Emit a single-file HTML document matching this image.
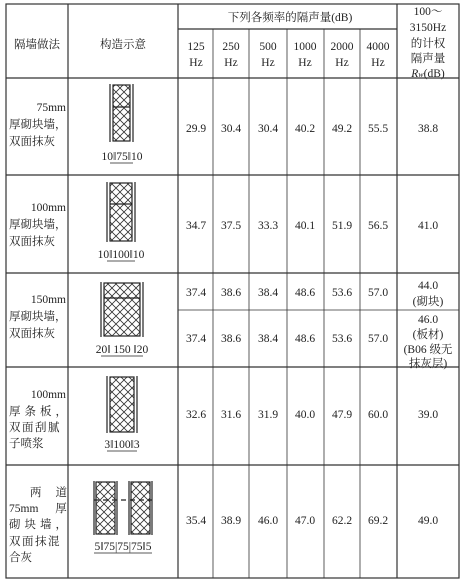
<!DOCTYPE html>
<html><head><meta charset="utf-8"><style>
html,body{margin:0;padding:0;background:#fff;}
svg{display:block}
text{font-family:"Liberation Serif","Noto Serif CJK SC",serif;fill:#222;font-size:11.5px}
.c{text-anchor:middle}.r{text-anchor:end}
.k{font-family:"Liberation Serif","Noto Serif CJK SC",serif;font-size:11.5px}
</style></head><body>
<svg width="462" height="580" viewBox="0 0 462 580" xmlns="http://www.w3.org/2000/svg">
<defs>
<pattern id="x" width="8" height="8" patternUnits="userSpaceOnUse">
<path d="M0 0L8 8M8 0L0 8" stroke="#333" stroke-width="0.8"/>
</pattern>
</defs>
<g stroke="#333" stroke-width="1.2" fill="none">
<rect x="6" y="4" width="453" height="574"/>
<line x1="68" y1="4" x2="68" y2="578"/>
<line x1="178" y1="4" x2="178" y2="578"/>
<line x1="397" y1="4" x2="397" y2="578"/>
<line x1="178" y1="29" x2="397" y2="29"/>
<g stroke-width="0.8">
<line x1="213" y1="29" x2="213" y2="578"/>
<line x1="249" y1="29" x2="249" y2="578"/>
<line x1="287" y1="29" x2="287" y2="578"/>
<line x1="324" y1="29" x2="324" y2="578"/>
<line x1="360" y1="29" x2="360" y2="578"/>
<line x1="178" y1="310" x2="459" y2="310"/>
</g>
<line x1="6" y1="78" x2="459" y2="78"/>
<line x1="6" y1="175" x2="459" y2="175"/>
<line x1="6" y1="273" x2="459" y2="273"/>
<line x1="6" y1="367" x2="459" y2="367"/>
<line x1="6" y1="465" x2="459" y2="465"/>
</g>
<!-- header -->
<text class="k c" x="37" y="48">隔墙做法</text>
<text class="k c" x="123" y="48">构造示意</text>
<text class="k c" x="290" y="21">下列各频率的隔声量(dB)</text>
<g class="c">
<text class="c" x="196" y="50">125</text><text class="c" x="196" y="66">Hz</text>
<text class="c" x="231" y="50">250</text><text class="c" x="231" y="66">Hz</text>
<text class="c" x="268" y="50">500</text><text class="c" x="268" y="66">Hz</text>
<text class="c" x="305" y="50">1000</text><text class="c" x="305" y="66">Hz</text>
<text class="c" x="342" y="50">2000</text><text class="c" x="342" y="66">Hz</text>
<text class="c" x="378" y="50">4000</text><text class="c" x="378" y="66">Hz</text>
</g>
<text class="c" x="428" y="15">100～</text>
<text class="c" x="428" y="31">3150Hz</text>
<text class="k c" x="428" y="47">的计权</text>
<text class="k c" x="428" y="62">隔声量</text>
<text class="c" x="428" y="77"><tspan font-style="italic">R</tspan><tspan font-size="8" font-style="italic">w</tspan>(dB)</text>
<!-- left column -->
<text class="r" x="66" y="111">75mm</text>
<text class="k" x="9" y="128">厚砌块墙，</text>
<text class="k" x="9" y="145">双面抹灰</text>
<text class="r" x="66" y="211">100mm</text>
<text class="k" x="9" y="228">厚砌块墙，</text>
<text class="k" x="9" y="245">双面抹灰</text>
<text class="r" x="66" y="303">150mm</text>
<text class="k" x="9" y="320">厚砌块墙，</text>
<text class="k" x="9" y="337">双面抹灰</text>
<text class="r" x="66" y="398">100mm</text>
<text class="k" x="9" y="415" letter-spacing="4">厚条板，</text>
<text class="k" x="9" y="431" letter-spacing="1.5">双面刮腻</text>
<text class="k" x="9" y="447">子喷浆</text>
<text class="k" x="30" y="496" letter-spacing="14">两道</text>
<text x="9" y="512">75mm <tspan class="k" dx="14">厚</tspan></text>
<text class="k" x="9" y="528" letter-spacing="4">砌块墙，</text>
<text class="k" x="9" y="545" letter-spacing="1.5">双面抹混</text>
<text class="k" x="9" y="561">合灰</text>
<!-- data -->
<g font-size="11">
<text class="c" x="196" y="132">29.9</text><text class="c" x="231" y="132">30.4</text><text class="c" x="268" y="132">30.4</text><text class="c" x="305" y="132">40.2</text><text class="c" x="342" y="132">49.2</text><text class="c" x="378" y="132">55.5</text><text class="c" x="428" y="132">38.8</text>
<text class="c" x="196" y="229">34.7</text><text class="c" x="231" y="229">37.5</text><text class="c" x="268" y="229">33.3</text><text class="c" x="305" y="229">40.1</text><text class="c" x="342" y="229">51.9</text><text class="c" x="378" y="229">56.5</text><text class="c" x="428" y="229">41.0</text>
<text class="c" x="196" y="296">37.4</text><text class="c" x="231" y="296">38.6</text><text class="c" x="268" y="296">38.4</text><text class="c" x="305" y="296">48.6</text><text class="c" x="342" y="296">53.6</text><text class="c" x="378" y="296">57.0</text>
<text class="c" x="428" y="289">44.0</text><text class="k c" x="428" y="305">(砌块)</text>
<text class="c" x="196" y="342">37.4</text><text class="c" x="231" y="342">38.6</text><text class="c" x="268" y="342">38.4</text><text class="c" x="305" y="342">48.6</text><text class="c" x="342" y="342">53.6</text><text class="c" x="378" y="342">57.0</text>
<text class="c" x="428" y="323">46.0</text><text class="k c" x="428" y="338">(板材)</text><text class="k c" x="428" y="353">(B06 级无</text><text class="k c" x="428" y="368" dy="-1">抹灰层)</text>
<text class="c" x="196" y="418">32.6</text><text class="c" x="231" y="418">31.6</text><text class="c" x="268" y="418">31.9</text><text class="c" x="305" y="418">40.0</text><text class="c" x="342" y="418">47.9</text><text class="c" x="378" y="418">60.0</text><text class="c" x="428" y="418">39.0</text>
<text class="c" x="196" y="524">35.4</text><text class="c" x="231" y="524">38.9</text><text class="c" x="268" y="524">46.0</text><text class="c" x="305" y="524">47.0</text><text class="c" x="342" y="524">62.2</text><text class="c" x="378" y="524">69.2</text><text class="c" x="428" y="524">49.0</text>
</g>
<!-- diagrams -->
<g stroke="#222" stroke-width="1.2">
<rect x="113" y="85" width="17" height="56" fill="url(#x)"/>
<line x1="110" y1="84" x2="110" y2="142"/><line x1="133" y1="84" x2="133" y2="142"/>
<line x1="113" y1="107" x2="130" y2="107"/>
<line x1="110" y1="163" x2="133" y2="163" stroke-width="0.8"/>
<rect x="110" y="183" width="22" height="58" fill="url(#x)"/>
<line x1="107" y1="182" x2="107" y2="242"/><line x1="135" y1="182" x2="135" y2="242"/>
<line x1="110" y1="204" x2="132" y2="204"/>
<line x1="107" y1="261" x2="135" y2="261" stroke-width="0.8"/>
<rect x="104" y="283" width="36" height="53" fill="url(#x)"/>
<line x1="101" y1="282" x2="101" y2="337"/><line x1="143" y1="282" x2="143" y2="337"/>
<line x1="104" y1="298" x2="140" y2="298"/>
<line x1="101" y1="356" x2="143" y2="356" stroke-width="0.8"/>
<rect x="110" y="377" width="24" height="55" fill="url(#x)"/>
<line x1="107" y1="376" x2="107" y2="433"/><line x1="137" y1="376" x2="137" y2="433"/>
<line x1="107" y1="451" x2="137" y2="451" stroke-width="0.8"/>
<rect x="96" y="482" width="19" height="52" fill="url(#x)"/>
<line x1="94" y1="481" x2="94" y2="535"/><line x1="117" y1="481" x2="117" y2="535"/>
<rect x="131" y="482" width="19" height="52" fill="url(#x)"/>
<line x1="129" y1="481" x2="129" y2="535"/><line x1="152" y1="481" x2="152" y2="535"/>
<line x1="94" y1="500" x2="152" y2="500" stroke-dasharray="5,4"/>
<line x1="94" y1="553" x2="152" y2="553" stroke-width="0.8"/>
</g>
<g font-size="10.5">
<text class="c" x="122" y="160">10‖75‖10</text>
<text class="c" x="121" y="258">10‖100‖10</text>
<text class="c" x="122" y="353">20‖  150  ‖20</text>
<text class="c" x="122" y="448">3‖100‖3</text>
<text class="c" x="123" y="550">5‖75|75|75‖5</text>
</g>
</svg>
</body></html>
